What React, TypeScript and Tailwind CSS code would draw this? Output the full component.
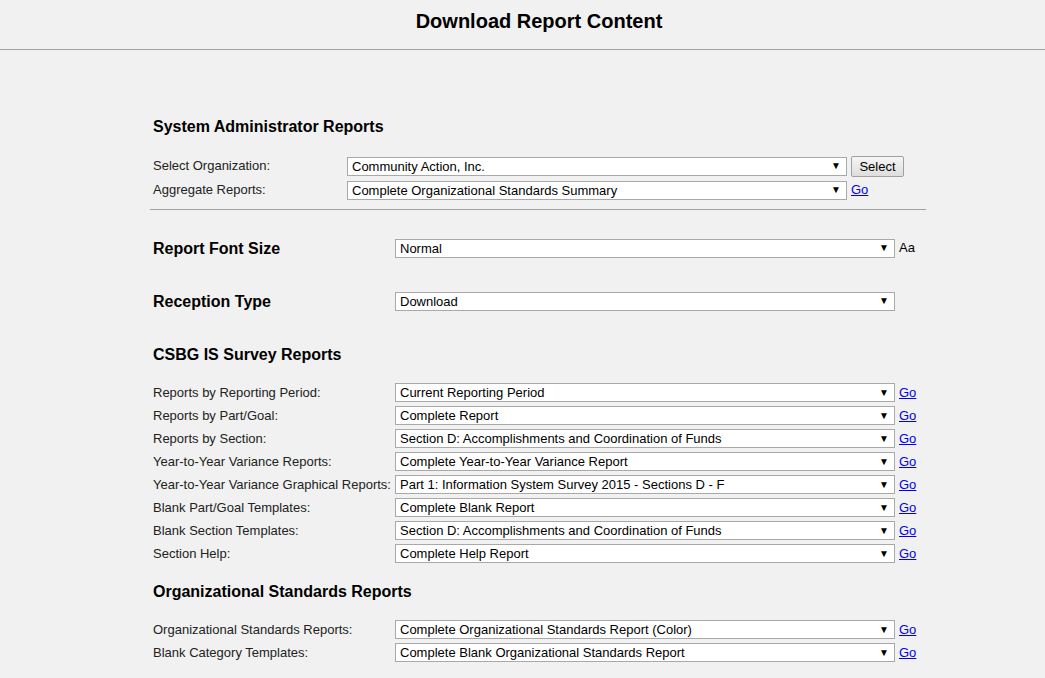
const CSBG_ROWS = [
  { label: "Reports by Reporting Period:", value: "Current Reporting Period" },
  { label: "Reports by Part/Goal:", value: "Complete Report" },
  { label: "Reports by Section:", value: "Section D: Accomplishments and Coordination of Funds" },
  { label: "Year-to-Year Variance Reports:", value: "Complete Year-to-Year Variance Report" },
  { label: "Year-to-Year Variance Graphical Reports:", value: "Part 1: Information System Survey 2015 - Sections D - F" },
  { label: "Blank Part/Goal Templates:", value: "Complete Blank Report" },
  { label: "Blank Section Templates:", value: "Section D: Accomplishments and Coordination of Funds" },
  { label: "Section Help:", value: "Complete Help Report" },
];

const STANDARDS_ROWS = [
  { label: "Organizational Standards Reports:", value: "Complete Organizational Standards Report (Color)" },
  { label: "Blank Category Templates:", value: "Complete Blank Organizational Standards Report" },
];

function FakeSelect({ value }: { value: string }) {
  return (
    <div className="w-[500px] h-[19px] flex items-center justify-between bg-white border border-[#a9a9a9] pl-[4px] pr-[5px] text-[13px] leading-none text-black">
      <span>{value}</span>
      <span className="text-[10px] leading-none">▼</span>
    </div>
  );
}

function GoLink() {
  return <a href="#" className="ml-[4px] text-[13px] text-[#0000ee] underline">Go</a>;
}

function Row({ label, value, labelWidth, children }: { label: string; value: string; labelWidth: string; children?: React.ReactNode }) {
  return (
    <div className="flex items-center h-[23px]">
      <div className={`${labelWidth} shrink-0 text-[13px] text-[#222]`}>{label}</div>
      <FakeSelect value={value} />
      {children}
    </div>
  );
}

export default function App() {
  return (
    <div className="min-h-screen bg-[#f0f1f0] font-['Liberation_Sans',Arial,sans-serif] text-black">
      {/* header */}
      <div className="h-[50px] border-b border-[#a0a0a0] flex justify-center pt-[9px] pl-[33px]">
        <h1 className="text-[20px] leading-[24px] font-bold">Download Report Content</h1>
      </div>

      <div className="ml-[150px] w-[776px]">
        {/* system admin */}
        <div className="pl-[3px]">
          <h2 className="mt-[67px] text-[16px] leading-[20px] font-bold">System Administrator Reports</h2>
          <div className="mt-[17px]">
            <div className="flex items-center h-[24px]">
              <div className="w-[194px] shrink-0 text-[13px] text-[#222]">Select Organization:</div>
              <FakeSelect value="Community Action, Inc." />
              <button className="ml-[4px] h-[21px] w-[53px] border border-[#a0a0a0] rounded-[2px] bg-gradient-to-b from-[#f6f6f6] to-[#dddddd] text-[13px] leading-none">
                Select
              </button>
            </div>
            <div className="flex items-center h-[24px]">
              <div className="w-[194px] shrink-0 text-[13px] text-[#222]">Aggregate Reports:</div>
              <FakeSelect value="Complete Organizational Standards Summary" />
              <GoLink />
            </div>
          </div>
        </div>

        <div className="mt-[7px] border-t border-[#a0a0a0]" />

        <div className="pl-[3px]">
          {/* font size */}
          <div className="mt-[26px] flex items-center h-[24px]">
            <div className="w-[242px] shrink-0 pt-[2px] text-[16px] font-bold">Report Font Size</div>
            <FakeSelect value="Normal" />
            <span className="ml-[4px] text-[13px]">Aa</span>
          </div>

          {/* reception */}
          <div className="mt-[29px] flex items-center h-[24px]">
            <div className="w-[242px] shrink-0 pt-[2px] text-[16px] font-bold">Reception Type</div>
            <FakeSelect value="Download" />
          </div>

          {/* csbg */}
          <h2 className="mt-[32px] text-[16px] leading-[20px] font-bold">CSBG IS Survey Reports</h2>
          <div className="mt-[16px]">
            {CSBG_ROWS.map((r) => (
              <Row key={r.label} label={r.label} value={r.value} labelWidth="w-[242px]">
                <GoLink />
              </Row>
            ))}
          </div>

          {/* org standards */}
          <h2 className="mt-[17px] text-[16px] leading-[20px] font-bold">Organizational Standards Reports</h2>
          <div className="mt-[16px]">
            {STANDARDS_ROWS.map((r) => (
              <Row key={r.label} label={r.label} value={r.value} labelWidth="w-[242px]">
                <GoLink />
              </Row>
            ))}
          </div>
        </div>
      </div>
    </div>
  );
}
